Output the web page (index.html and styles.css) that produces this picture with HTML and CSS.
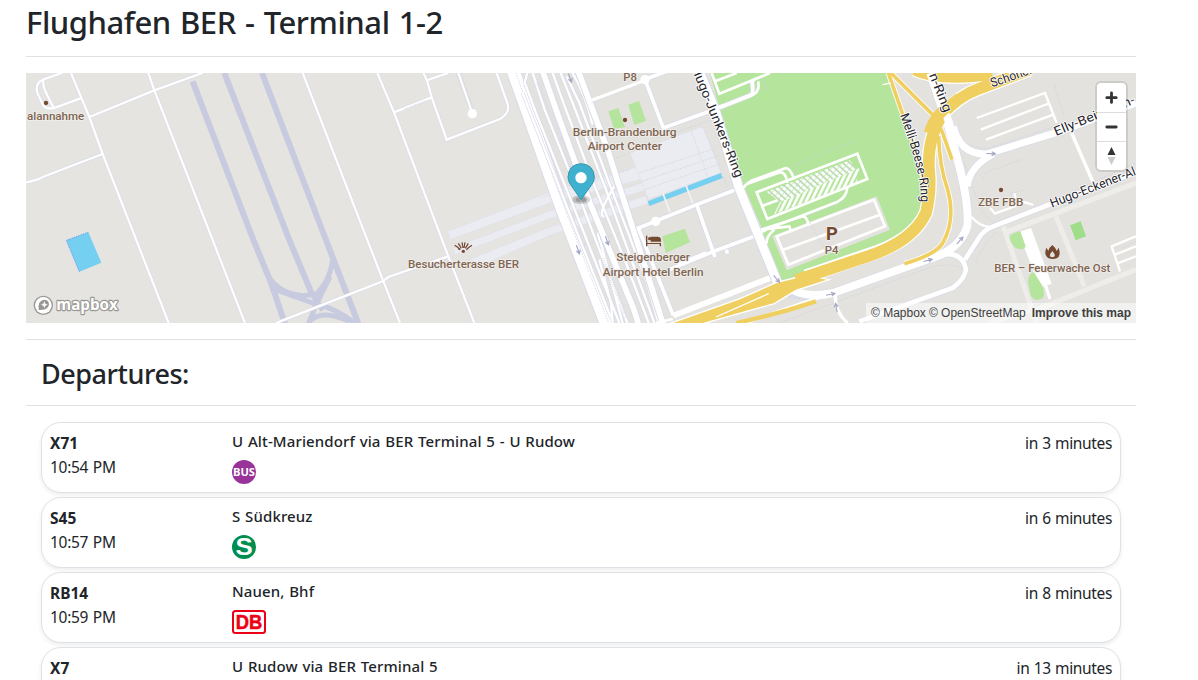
FILE: index.html
```html
<!DOCTYPE html>
<html lang="en">
<head>
<meta charset="utf-8">
<title>Flughafen BER - Terminal 1-2</title>
<link rel="stylesheet" href="styles.css">
</head>
<body>
<main class="page">
  <h1 class="title"><span class="title-text">Flughafen BER - Terminal 1-2</span></h1>
  <hr class="rule">
  <section class="map">
    <svg class="map-canvas" viewBox="0 0 3330 750" preserveAspectRatio="none">
      <defs>
        <pattern id="bays-a" width="14" height="14" patternUnits="userSpaceOnUse" patternTransform="rotate(-48)"><rect width="9" height="12" fill="#fff"/><rect x="9" width="2" height="14" fill="#c9cce0"/></pattern>
        <pattern id="bays-b" width="14" height="50" patternUnits="userSpaceOnUse" patternTransform="rotate(26)"><rect width="8" height="50" fill="#fff"/></pattern>
        <path id="arrow" d="M-14 0H12M2 -6L13 0L2 6" fill="none" stroke="#a3a7c4" stroke-width="3.5"/>
        <path id="ring-west" d="M1996 -15L2132 321"/>
        <path id="ring-north" d="M2709 6L2757 126"/>
        <path id="melli" d="M2622 126Q2664 245 2677 308Q2686 350 2684 394"/>
        <path id="schon" d="M2898 43Q2975 18 3060 -15"/>
        <path id="elly" d="M3090 189L3350 82"/>
        <path id="hugo" d="M3078 404L3350 298"/>
        <path id="w1" d="M135 0L190 132L230 243L428 750M367 0L385 52L657 750M190 132L385 52L530 0M0 328Q30 323 50 312L230 243M108 0L50 20Q25 32 35 62L52 98Q65 112 90 103L163 76M52 20Q50 40 58 55L82 103M830 0L1070 620L1122 750M1054 0L1104 118L1267 550L1345 750M1104 118L1217 73M1192 0L1204 25L1217 73L1262 200L1422 138Q1454 120 1444 90L1412 0M1202 22L1267 0M1297 0L1339 122M1267 550L1087 612L1070 625L822 722L750 750"/>
        <path id="w2" d="M1504 0L1496 28L1530 120L1670 470L1780 750M1520 0L1556 110L1652 350L1705 490L1804 750M1580 0L1616 100L1710 350L1800 570L1868 750M1600 -10L1640 90L1740 350L1885 750M1622 10L1660 90L1757 350L1860 620L1898 750M1490 60L1630 420L1755 735M1760 750L1755 690L1720 560M1735 480Q1705 465 1724 510L1790 750M1640 0Q1680 70 1700 155M1765 340Q1710 430 1735 430"/>
        <path id="w3" d="M1857 20L1912 165L2070 108L2175 66Q2184 60 2178 25M1850 22L1930 -8M1942 728L1837 465L2012 395L2137 347M2012 395L2067 552M1930 590L2068 533L2185 490M2101 530L2104 542M1955 575L2040 540"/>
      </defs>
      <rect width="3330" height="750" fill="#e5e4e0"/>
      <path class="ground" d="M1450 0H3330V750H1740Z"/>

      <g class="runway">
        <path d="M500 25L682 501L732 621L777 752M595 0L790 501L857 661M708 0L900 501L927 571L997 752"/>
        <path class="taxiway" d="M717 590Q745 660 830 668L870 664Q915 620 920 555M735 645Q780 662 860 690Q930 705 985 750M912 611L868 700L848 752M857 661L890 712M848 748Q885 705 970 745"/>
      </g>

      <path class="grass" d="M2052 0H2584L2632 150L2690 300V400L2660 470L2552 540L2262 625L2222 520L2205 460L2145 320L2092 150Z"/>
      <path class="grass" d="M1747 115L1777 105L1797 163L1764 167ZM1807 95L1839 84L1860 143L1825 156ZM1909 490L1977 467L1992 508L1919 540Z"/>
      <path class="water" d="M121 502L187 478L226 569L160 596Z"/>
      <path d="M187 478L121 502L160 596" fill="none" stroke="#6d9ef0" stroke-width="3" stroke-dasharray="4 3"/>
      <g class="pier">
        <path d="M1265 475L1572 358L1840 280L1850 318L1572 390L1272 500Z"/>
        <path d="M1280 525L1572 413L1850 330L1858 352L1572 437L1286 546Z"/>
        <path d="M1330 560L1572 462L1860 368L1866 392L1572 487L1375 573Z"/>
        <path d="M1812 240L2032 160L2087 300L1867 378Z"/>
        <path class="dash" d="M1840 300L2070 225M1848 325L2078 248M1856 350L2084 272M1995 172L2045 310M1812 240L1750 262M1810 290L1545 375M1550 315L1650 275M1630 530L1840 460M1900 195L2060 140M2030 160L2105 345"/>
      </g>
      <path class="water" d="M1865 385L2084 300L2090 315L1870 399Z"/>
      <path d="M1911 362L1932 418M1980 337L2000 390" stroke="#f3f3f6" stroke-width="5"/>

      <path class="edge" d="M1462 -5L1602 390L1742 755" stroke-width="44"/>
      <path class="road" d="M1462 -5L1602 390L1742 755" stroke-width="38"/>
      <path d="M1470 0L1608 385L1748 750" class="dash"/>
      <use href="#w1" class="edge" stroke-width="10.5"/><use href="#w1" class="road" stroke-width="6.8"/>
      <path class="dash" d="M1136 108L1205 81M1290 0L1328 102M1305 0L1342 108"/>
      <circle cx="1339" cy="122" r="14" fill="#fff"/>
      <use href="#w2" class="edge" stroke-width="11"/><use href="#w2" class="road" stroke-width="7"/>
      <path class="edge" d="M1550 -5L1592 115L1692 390L1822 705L1838 755M1657 -5L1748 240L1778 335L1822 470L1912 755" stroke-width="23"/>
      <path class="road" d="M1550 -5L1592 115L1692 390L1822 705L1838 755M1657 -5L1748 240L1778 335L1822 470L1912 755" stroke-width="17"/>
      <path d="M1535 30L1615 220L1648 340M1730 555L1802 735" fill="none" stroke="#d7d9e7" stroke-width="10" stroke-dasharray="2 5"/>
      <path d="M1697 82L1850 25" stroke="#fff" stroke-width="10"/><path class="dash" d="M1697 88L1850 31"/>

      <use href="#w3" class="edge" stroke-width="16"/><use href="#w3" class="road" stroke-width="11"/>
      <circle cx="1857" cy="20" r="14" fill="#fff"/><circle cx="1889" cy="445" r="14" fill="#fff"/>
      <path class="road" d="M1942 728L2240 612" stroke-width="17"/>
      <path class="edge" d="M2020 -5L2067 110L2137 340L2255 630" stroke-width="32"/>
      <path class="road" d="M2020 -5L2067 110L2137 340L2255 630" stroke-width="26"/>
      <path class="road" d="M2057 0L2080 62L2232 0M2067 25L2132 0M2070 105L2175 68Q2204 58 2196 25M2176 28L2192 15" stroke-width="8"/>
      <path class="dash" d="M2210 15L2225 45L2195 55M2303 275L2482 205M2303 275L2315 310"/>

      <path d="M2239 490L2552 370L2592 470L2282 592Z" fill="#e3e2df"/>
      <path class="road" d="M2252 490L2544 380L2577 460L2287 575ZM2272 530L2562 425" stroke-width="8"/>
      <path class="dash" d="M2345 435L2395 530M2350 428L2455 385"/>
      <path class="road" d="M2192 358L2494 242L2524 318L2224 438ZM2210 398L2255 382M2152 345Q2165 325 2190 318L2280 285Q2296 288 2304 320M2165 332L2262 298Q2280 297 2284 330M2205 470L2290 460Q2290 460 2296 478M2205 470L2330 430Q2343 430 2348 458M2205 478L2225 468L2435 386Q2460 374 2464 345M2222 512Q2220 490 2245 470" stroke-width="8"/>
      <path fill="url(#bays-a)" d="M2222 356L2472 262L2490 290L2264 388Z"/>
      <path fill="url(#bays-b)" d="M2244 424L2262 388L2500 285L2492 328Z"/>

      <path class="service" d="M2932 480L3330 330M2932 460L3032 750M3090 430L3175 640M3020 715L3330 590M2890 750L3020 710"/>
      <path fill="#fff" d="M2977 478L3015 465L3077 632L3042 645Z"/>
      <path class="road" d="M3058 635L3072 678" stroke-width="9"/>
      <path class="grass" d="M2950 490Q2962 477 2983 475L2999 520Q2995 532 2974 527Q2954 518 2950 490ZM3006 625Q3008 600 3024 598L3050 640Q3060 672 3045 678Q3025 688 3013 665Z"/>
      <path fill="#9fdd8b" d="M3132 457L3164 445L3180 490L3149 502Z"/>

      <g class="dash"><path d="M2260 750L2680 595Q2770 560 2820 590M2850 565Q2880 500 2910 478M2795 230Q2830 300 2835 330L2870 420L2905 450L3060 390L3330 270M2800 200Q2850 230 2890 225L3330 80M2870 320Q2880 290 2920 285L2990 258M2950 362L3000 350M3085 35L3115 130M3330 505L3290 525"/></g>
      <g class="edge"><path stroke-width="28" d="M2290 662Q2350 675 2422 660L2562 610L2702 560Q2800 535 2824 460Q2830 400 2800 280L2770 170L2712 0"/><path stroke-width="25" d="M2782 160Q2802 245 2882 243L3102 175L3330 90M2824 340Q2830 280 2902 243"/></g>
      <g class="edge" stroke-width="18"><path d="M2747 545Q2810 535 2820 590Q2815 620 2780 645L2500 745M2817 560L2862 490Q2875 470 2902 460L3082 390L3330 298"/></g>
      <g class="road">
        <path stroke-width="24" d="M2290 645Q2340 678 2422 660L2562 610L2702 560Q2800 535 2824 460Q2830 400 2800 280L2770 170L2712 0"/>
        <path stroke-width="21" d="M2782 160Q2802 245 2882 243L3102 175L3330 90M2824 340Q2830 280 2902 243"/>
        <path stroke-width="14" d="M2747 545Q2810 535 2820 590Q2815 620 2780 645L2500 745M2817 560L2862 490Q2875 470 2902 460L3082 390L3330 298"/>
        <path stroke-width="10" d="M2427 665Q2428 720 2465 750M2150 752L2390 670M3137 180L3202 330"/>
        <path stroke-width="7" d="M2837 432Q2860 460 2892 462M2852 135L3057 60L3092 150M2864 170L3072 90M2880 200L3082 125M2892 405L2907 422L2997 388L3022 396M2965 360L2973 395M3282 595L3257 520L3330 490M3267 545L3330 520M3277 570L3330 550M1890 750L1940 738"/>
      </g>
      <g class="yellow-edge">
        <path stroke-width="42" d="M2340 610L2530 545Q2660 505 2700 420Q2715 360 2710 300Q2700 200 2752 120Q2800 70 2852 50L3010 -10"/>
        <path stroke-width="38" d="M2665 -8Q2740 28 2900 5"/>
        <path stroke-width="16" d="M2587 0L2627 115Q2680 245 2702 370M2595 0L2725 130L2750 180L2778 260M2738 190Q2740 280 2765 350Q2790 440 2750 510Q2730 545 2635 572"/>
      </g>
      <path d="M1930 752L2142 677L2250 629L2340 606L2410 620L2310 652L2245 692L2030 752Z" fill="#f0cf61" stroke="#fff" stroke-width="4"/>
      <g class="yellow">
        <path stroke-width="35" d="M2310 622L2530 548Q2660 505 2700 420Q2715 360 2710 300Q2700 200 2752 120Q2800 70 2852 50L3010 -10"/>
        <path stroke-width="31" d="M2665 -8Q2740 28 2900 5"/>
        <path stroke-width="11" d="M2587 0L2627 115Q2680 245 2702 370M2595 0L2725 130L2750 180L2778 260M2738 190Q2740 280 2765 350Q2790 440 2750 510Q2730 545 2635 572"/>
        <path stroke-width="13" d="M2130 750Q2250 725 2370 685"/>
      </g>
      <path d="M2070 732L2228 662M2570 35L2594 30" stroke="#fff" stroke-width="4"/>
      <path d="M2712 0L2770 150L2778 185" class="road" stroke-width="23"/>
      <path d="M2710 180Q2720 140 2752 112L2800 75" class="yellow" stroke-width="33"/>
      <g>
        <use href="#arrow" transform="translate(1632 15) rotate(70)"/><use href="#arrow" transform="translate(1656 530) rotate(70)"/><use href="#arrow" transform="translate(1743 503) rotate(70)"/>
        <use href="#arrow" transform="translate(2252 618) rotate(50)"/><use href="#arrow" transform="translate(2414 664) rotate(-12)"/><use href="#arrow" transform="translate(2431 704) rotate(-100)"/>
        <use href="#arrow" transform="translate(2706 562) rotate(-15)"/><use href="#arrow" transform="translate(2802 502) rotate(-48)"/><use href="#arrow" transform="translate(2895 242) rotate(2)"/>
      </g>

      <g class="street">
        <text><textPath href="#ring-west" textLength="357" lengthAdjust="spacingAndGlyphs">Hugo-Junkers-Ring</textPath></text>
        <text><textPath href="#ring-north" textLength="123" lengthAdjust="spacingAndGlyphs">n-Ring</textPath></text>
        <text><textPath href="#melli" textLength="270" lengthAdjust="spacingAndGlyphs">Melli-Beese-Ring</textPath></text>
        <text><textPath href="#schon" textLength="150" lengthAdjust="spacingAndGlyphs">Schönefe</textPath></text>
        <text><textPath href="#elly" textLength="258" lengthAdjust="spacingAndGlyphs">Elly-Beinhorn-</textPath></text>
        <text><textPath href="#hugo" textLength="272" lengthAdjust="spacingAndGlyphs">Hugo-Eckener-Al</textPath></text>
      </g>
      <g class="poi">
        <text x="3" y="140" textLength="172" lengthAdjust="spacingAndGlyphs">alannahme</text>
        <text x="1146" y="585" textLength="333" lengthAdjust="spacingAndGlyphs">Besucherterasse BER</text>
        <text x="1640" y="189" textLength="312" lengthAdjust="spacingAndGlyphs">Berlin-Brandenburg</text>
        <text x="1685" y="231" textLength="223" lengthAdjust="spacingAndGlyphs">Airport Center</text>
        <text x="1771" y="564" textLength="221" lengthAdjust="spacingAndGlyphs">Steigenberger</text>
        <text x="1730" y="608" textLength="303" lengthAdjust="spacingAndGlyphs">Airport Hotel Berlin</text>
        <text x="1792" y="24" textLength="41" lengthAdjust="spacingAndGlyphs">P8</text>
        <text x="2396" y="542" textLength="41" lengthAdjust="spacingAndGlyphs">P4</text>
        <text x="2856" y="399" textLength="136" lengthAdjust="spacingAndGlyphs">ZBE FBB</text>
        <text x="2905" y="597" textLength="348" lengthAdjust="spacingAndGlyphs">BER – Feuerwache Ost</text>
        <text class="parking" x="2400" y="501">P</text>
      </g>
      <g fill="#75492f">
        <circle cx="60" cy="90" r="6.5"/><circle cx="1797" cy="141" r="6.5"/><circle cx="2925" cy="351" r="6.5"/><circle cx="1312" cy="535" r="5"/>
        <path d="M1306 525L1297 510M1318 525L1327 510M1311 524L1308 507M1314 524L1317 507M1301 529L1296 525M1303 529L1295 522L1286 516M1321 529L1329 522L1338 516" transform="translate(0 1)" fill="none" stroke="#75492f" stroke-width="3.8"/>
        <path d="M1860 488h4v22h41v-9q0-10-11-10h-20v15h31v14h-4v-7h-37v7h-4z"/><circle cx="1871" cy="497" r="5"/>
        <path fill-rule="evenodd" d="M3079 516Q3090 525 3092 534L3098 524Q3106 550 3092 556Q3079 560 3066 555Q3053 545 3061 524L3067 533Q3069 524 3079 516ZM3079 534Q3064 552 3079 553Q3094 552 3079 534Z"/>
      </g>
      <g transform="translate(1 2)">
        <ellipse cx="1665" cy="378" rx="27" ry="13" fill="#333" opacity=".2"/><ellipse cx="1665" cy="378" rx="17" ry="8" fill="#333" opacity=".25"/>
        <path d="M1664 378L1632 332Q1625 322 1625 310Q1627 272 1664 270Q1702 272 1704 310Q1704 322 1697 332Z" fill="#3fb1ce" stroke="#3397b2" stroke-width="3"/><circle cx="1664" cy="312" r="17" fill="#fff"/>
      </g>
      <g class="wordmark">
        <circle cx="52" cy="697" r="29" fill="#989894"/><circle cx="52" cy="697" r="25" fill="#fff"/>
        <path d="M38 711Q35 682 54 680Q69 680 69 695Q66 712 38 711Z" fill="#989894"/><path d="M55 685L58 692L65 695L58 698L55 705L52 698L45 695L52 692Z" fill="#fff"/>
        <text x="91" y="711" textLength="184" lengthAdjust="spacingAndGlyphs">mapbox</text>
      </g>
    </svg>
    <div class="controls">
      <button class="control" aria-label="Zoom in"><svg viewBox="0 0 29 29"><path d="M14.5 10v9.4M9.8 14.7h9.4" stroke="#333" stroke-width="2.8" stroke-linecap="round"/></svg></button>
      <button class="control" aria-label="Zoom out"><svg viewBox="0 0 29 29"><path d="M9.8 14h9.4" stroke="#333" stroke-width="2.8" stroke-linecap="round"/></svg></button>
      <button class="control" aria-label="Reset bearing"><svg viewBox="0 0 29 29"><path d="M10.5 13l4-8 4 8z" fill="#333"/><path d="M10.5 15l4 8 4-8z" fill="#ccc"/></svg></button>
    </div>
    <div class="attribution"><span>© Mapbox</span><span class="osm">© OpenStreetMap</span><b>Improve this map</b></div>
  </section>
  <hr class="rule">
  <h2 class="subtitle"><span class="subtitle-text">Departures:</span></h2>
  <hr class="rule">
  <section class="departures">
    <article class="card">
      <div class="service-info"><strong class="line">X71</strong><span class="time">10:54 PM</span></div>
      <div class="destination"><span class="name">U Alt-Mariendorf via BER Terminal 5 - U Rudow</span>
        <svg class="badge" width="24" height="24"><circle cx="12" cy="12" r="12" fill="#993399"/><text x="1" y="16" textLength="22" lengthAdjust="spacingAndGlyphs" class="bus">BUS</text></svg></div>
      <span class="due">in 3 minutes</span>
    </article>
    <article class="card">
      <div class="service-info"><strong class="line">S45</strong><span class="time">10:57 PM</span></div>
      <div class="destination"><span class="name">S Südkreuz</span>
        <svg class="badge" width="24" height="24"><circle cx="12" cy="12" r="12" fill="#008d4f"/><text x="3.4" y="20.2" textLength="17.2" lengthAdjust="spacingAndGlyphs" class="sbahn">S</text></svg></div>
      <span class="due">in 6 minutes</span>
    </article>
    <article class="card">
      <div class="service-info"><strong class="line">RB14</strong><span class="time">10:59 PM</span></div>
      <div class="destination"><span class="name">Nauen, Bhf</span>
        <svg class="badge" width="34" height="24"><rect x="1" y="1" width="32" height="22" rx="2.5" fill="#fff" stroke="#ec0016" stroke-width="2"/><text x="3.7" y="19.3" textLength="26.5" lengthAdjust="spacingAndGlyphs" class="db">DB</text></svg></div>
      <span class="due">in 8 minutes</span>
    </article>
    <article class="card">
      <div class="service-info"><strong class="line">X7</strong><span class="time">11:04 PM</span></div>
      <div class="destination"><span class="name">U Rudow via BER Terminal 5</span></div>
      <span class="due">in 13 minutes</span>
    </article>
  </section>
</main>
</body>
</html>
```
FILE: styles.css
```css
* { box-sizing: border-box; }
html, body { margin: 0; height: 680px; overflow: hidden; background: #fff; }
body { font-family: "Noto Sans", "Open Sans", sans-serif; font-size: 15.5px; line-height: 24px; color: #212529; }
.page { width: 1110px; margin-left: 26px; }
.title { margin: 0; height: 56px; padding-top: 3px; font-size: 31px; font-weight: 500; line-height: 38px; white-space: nowrap; letter-spacing: -.45px; word-spacing: 1.6px; }
.rule { height: 1px; margin: 0; border: 0; background: #e0e1e2; }
.map { position: relative; height: 250px; margin: 16px 0; overflow: hidden; }
.map-canvas { display: block; width: 1110px; height: 250px; }
.ground { fill: #e3e2df; }
.runway { fill: none; stroke: #c8cadf; stroke-width: 18; }
.taxiway { stroke-width: 15; }
.grass { fill: #b5e59d; }
.water { fill: #75cff0; }
.pier { fill: #ebecf1; stroke: #dfe0ea; stroke-width: 2; }
.edge { fill: none; stroke: #d9dbe8; }
.road { fill: none; stroke: #fff; }
.dash { fill: none; stroke: #ced0e0; stroke-width: 2.5; stroke-dasharray: 4 4; }
.service { fill: none; stroke: #eeedea; stroke-width: 15; }
.yellow { fill: none; stroke: #f0cf61; }
.yellow-edge { fill: none; stroke: #fff; }
.street { font: 400 38px Roboto, sans-serif; fill: #25252c; stroke: #fff; stroke-width: 5; paint-order: stroke; stroke-linejoin: round; }
.poi { font: 500 35px Roboto, sans-serif; fill: #806552; stroke: #f0efec; stroke-width: 5; paint-order: stroke; stroke-linejoin: round; }
.poi .parking { font-size: 55px; font-weight: 700; fill: #75492f; }
.wordmark text { font: 700 48px "Open Sans", sans-serif; fill: #fff; stroke: #989894; stroke-width: 7; paint-order: stroke; stroke-linejoin: round; }
.controls { position: absolute; top: 10px; right: 10px; width: 29px; border-radius: 4px; background: #fff; box-shadow: 0 0 0 2px rgba(0, 0, 0, .1); }
.control { display: block; width: 29px; height: 29px; padding: 0; border: 0; background: none; }
.control + .control { border-top: 1px solid #ddd; }
.control svg { display: block; width: 29px; height: 29px; }
.attribution { position: absolute; right: 0; bottom: 0; width: 270px; height: 20px; padding: 0 5px; display: flex; gap: 3px; background: rgba(255, 255, 255, .5); font: 12px/20px "Liberation Sans", Arial, sans-serif; color: #404040; white-space: nowrap; }
.attribution b { margin-left: auto; }
.subtitle { margin: 0; height: 65px; padding: 17px 0 0 15px; font-size: 27px; font-weight: 500; line-height: 34px; letter-spacing: -.45px; }
.departures { display: flex; flex-direction: column; gap: 4px; height: 274px; padding: 16px 15px 0; overflow: hidden; }
.card { display: flex; flex: none; height: 71px; padding: 8px; border: 1px solid #dee2e6; border-radius: 20px; background: #fff; box-shadow: 0 2px 4px rgba(0, 0, 0, .075); white-space: nowrap; }
.service-info { display: flex; flex-direction: column; width: 182px; }
.line { font-size: 15.5px; font-weight: 700; }
.time { letter-spacing: -.3px; word-spacing: 1px; }
.destination { flex: 1; display: flex; flex-direction: column; }
.name { height: 29px; line-height: 20px; font-size: 15px; font-weight: 500; letter-spacing: .12px; word-spacing: .7px; }
.badge { display: block; }
.due { letter-spacing: -.35px; word-spacing: .6px; }
.bus { font: 700 11px "Open Sans", sans-serif; fill: #fff; }
.sbahn { font: 700 23px "Liberation Sans", sans-serif; fill: #fff; }
.db { font: 700 20px "Liberation Sans", sans-serif; fill: #ec0016; stroke: #ec0016; stroke-width: .5; }
```
